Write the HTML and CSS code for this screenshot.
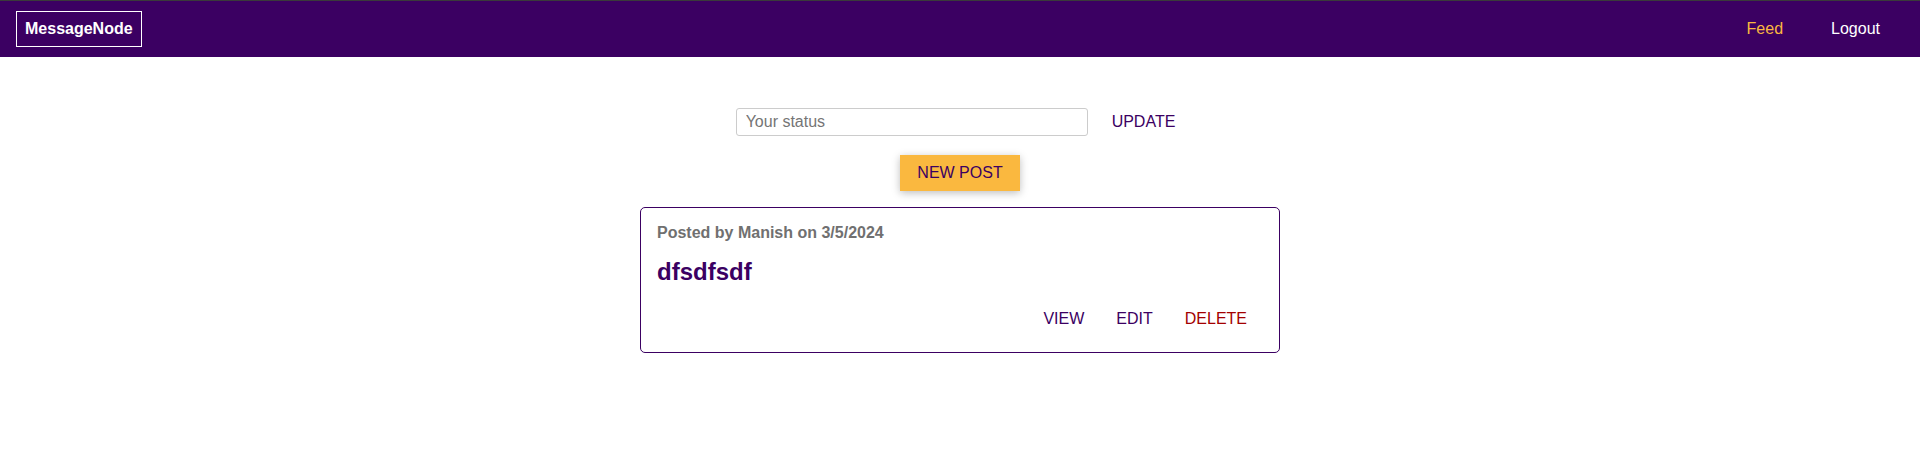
FILE: index.html
```html
<!DOCTYPE html>
<html lang="en">
<head>
<meta charset="utf-8">
<title>MessageNode</title>
<link rel="stylesheet" href="styles.css">
</head>
<body>
<header class="main-header">
  <div class="logo">MessageNode</div>
  <nav class="nav">
    <a class="nav-item nav-item--active" href="#">Feed</a>
    <a class="nav-item" href="#">Logout</a>
  </nav>
</header>
<main class="feed">
  <form class="feed-status">
    <input class="status-input" type="text" placeholder="Your status">
    <button class="btn btn--flat" type="button">UPDATE</button>
  </form>
  <div class="feed-control">
    <button class="btn btn--raised" type="button">NEW POST</button>
  </div>
  <article class="post">
    <h3 class="post-meta">Posted by Manish on 3/5/2024</h3>
    <h1 class="post-title">dfsdfsdf</h1>
    <div class="post-actions">
      <button class="btn btn--flat btn--small" type="button">VIEW</button>
      <button class="btn btn--flat btn--small" type="button">EDIT</button>
      <button class="btn btn--flat btn--small btn--danger" type="button">DELETE</button>
    </div>
  </article>
</main>
</body>
</html>
```

FILE: styles.css
```css
* { box-sizing: border-box; }

body {
  margin: 0;
  font-family: "Liberation Sans", Arial, sans-serif;
  font-size: 16px;
  background: #fff;
}

.main-header {
  display: flex;
  align-items: center;
  justify-content: space-between;
  height: 57px;
  border-top: 1px solid #3a3a3a;
  background: #3b0062;
  padding: 0 40px 0 16px;
}

.logo {
  color: #fff;
  font-weight: bold;
  font-size: 16px;
  line-height: 18px;
  border: 1px solid #fff;
  padding: 8px;
}

.nav {
  display: flex;
  gap: 48px;
}

.nav-item {
  color: #fff;
  text-decoration: none;
  font-size: 16px;
  line-height: 18px;
}

.nav-item--active {
  color: #fab83f;
}

.feed {
  display: flex;
  flex-direction: column;
  align-items: center;
}

.feed-status {
  display: flex;
  align-items: center;
  justify-content: center;
  margin: 48px 0 0;
  padding-left: 7px;
}

.status-input {
  width: 352px;
  height: 28px;
  border: 1px solid #ccc;
  border-radius: 3px;
  padding: 0 9px;
  font: inherit;
  color: #333;
}

.status-input::placeholder {
  color: #757575;
}

.btn {
  font: inherit;
  font-size: 16px;
  line-height: 18px;
  cursor: pointer;
  color: #3b0062;
  padding: 8px 16px;
  border: 1px solid #3b0062;
  background: transparent;
}

.btn--flat {
  border: none;
}

.feed-status .btn {
  margin-left: 8px;
}

.btn--small {
  padding: 4px 16px;
}

.btn--danger {
  color: #a30000;
}

.feed-control {
  display: flex;
  justify-content: center;
  margin-top: 16px;
}

.btn--raised {
  background: #fab83f;
  border: 1px solid #fab83f;
  box-shadow: 0 2px 8px rgba(0, 0, 0, 0.26);
}

.post {
  width: 640px;
  margin-top: 16px;
  border: 1px solid #3b0062;
  border-radius: 5px;
  padding: 16px 16px 20px;
}

.post-meta {
  margin: 0 0 16px;
  font-size: 16px;
  line-height: 18px;
  font-weight: bold;
  color: #707070;
}

.post-title {
  margin: 0;
  font-size: 24px;
  line-height: 28px;
  font-weight: bold;
  color: #3b0062;
}

.post-actions {
  display: flex;
  justify-content: flex-end;
  margin-top: 20px;
}
```
